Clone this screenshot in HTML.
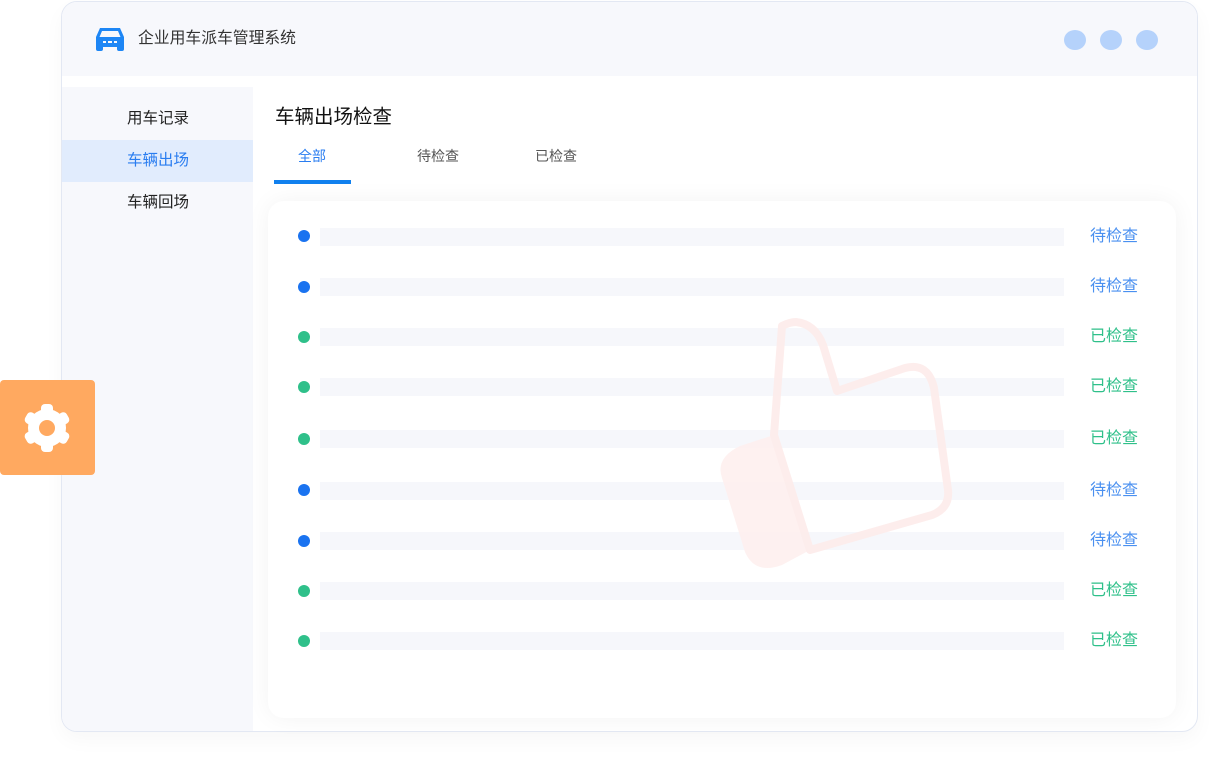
<!DOCTYPE html>
<html><head><meta charset="utf-8"><style>
*{margin:0;padding:0;box-sizing:border-box}
body{width:1225px;height:770px;background:#fff;position:relative;overflow:hidden;font-family:"Liberation Sans","Noto Sans CJK SC",sans-serif}
.card{position:absolute;left:61px;top:1px;width:1137px;height:731px;border:1.5px solid #e3e8f3;border-radius:16px;background:#fff;overflow:hidden;box-shadow:0 8px 20px rgba(0,0,0,0.03)}
.hdr{position:absolute;left:0;top:0;width:100%;height:74px;background:#f7f8fc}
.side{position:absolute;left:0;top:85px;width:191px;height:650px;background:#f7f8fc}
.it{position:absolute;left:0;width:191px;height:42px;line-height:42px;padding-left:65px;font-size:15.5px;color:#222}
.ab{position:absolute;font-size:15px}
.panel{position:absolute;left:268px;top:201px;width:908px;height:517px;background:#fff;border-radius:16px;box-shadow:0 0 24px rgba(0,0,0,0.05)}
.dot{position:absolute;left:298px;width:12px;height:12px;border-radius:50%}
.bar{position:absolute;left:320px;width:744px;height:18px;background:#f6f7fb}
.lb{position:absolute;left:1090px;font-size:16px;line-height:20px}
.b{color:#4a90f0}.g{color:#2fc08a}
</style></head><body>
<div class="card">
 <div class="hdr"></div>
 <div class="side"></div>
 <div class="it" style="top:96px">用车记录</div>
 <div class="it" style="top:138px;background:#e1ecfd;color:#2a7df0">车辆出场</div>
 <div class="it" style="top:180px">车辆回场</div>
</div>
<svg style="position:absolute;left:94px;top:26px" width="32" height="26" viewBox="0 0 32 26"><path d="M6 2h20l4 9v12a2 2 0 0 1-2 2h-3a2 2 0 0 1-2-2v-2H9v2a2 2 0 0 1-2 2H4a2 2 0 0 1-2-2V11z" fill="#1d86f5"/><path d="M8 5h16l2.5 6h-21z" fill="#f7f8fc"/><rect x="9" y="15" width="3" height="2" fill="#f7f8fc"/><rect x="14" y="15" width="4" height="2" fill="#f7f8fc"/><rect x="20" y="15" width="3" height="2" fill="#f7f8fc"/></svg>
<div class="ab" style="left:138px;top:25px;font-size:15.8px;color:#333">企业用车派车管理系统</div>
<div style="position:absolute;left:1064px;top:30px;width:22px;height:20px;border-radius:50%;background:#b5d2fb"></div>
<div style="position:absolute;left:1100px;top:30px;width:22px;height:20px;border-radius:50%;background:#b5d2fb"></div>
<div style="position:absolute;left:1136px;top:30px;width:22px;height:20px;border-radius:50%;background:#b5d2fb"></div>
<div class="ab" style="left:275px;top:100px;font-size:19.5px;color:#111">车辆出场检查</div>
<div class="ab" style="left:298px;top:146px;font-size:14px;color:#2a7df0">全部</div>
<div class="ab" style="left:417px;top:146px;font-size:14px;color:#555">待检查</div>
<div class="ab" style="left:535px;top:146px;font-size:14px;color:#555">已检查</div>
<div style="position:absolute;left:274px;top:180px;width:77px;height:4px;background:#1080ee"></div>
<div class="panel"></div>
<div class="dot" style="top:230px;background:#1a73f0"></div><div class="bar" style="top:228px"></div><div class="lb b" style="top:227px">待检查</div>
<div class="dot" style="top:281px;background:#1a73f0"></div><div class="bar" style="top:278px"></div><div class="lb b" style="top:277px">待检查</div>
<div class="dot" style="top:331px;background:#2fc08a"></div><div class="bar" style="top:328px"></div><div class="lb g" style="top:327px">已检查</div>
<div class="dot" style="top:381px;background:#2fc08a"></div><div class="bar" style="top:378px"></div><div class="lb g" style="top:377px">已检查</div>
<div class="dot" style="top:433px;background:#2fc08a"></div><div class="bar" style="top:430px"></div><div class="lb g" style="top:429px">已检查</div>
<div class="dot" style="top:484px;background:#1a73f0"></div><div class="bar" style="top:482px"></div><div class="lb b" style="top:481px">待检查</div>
<div class="dot" style="top:535px;background:#1a73f0"></div><div class="bar" style="top:532px"></div><div class="lb b" style="top:531px">待检查</div>
<div class="dot" style="top:585px;background:#2fc08a"></div><div class="bar" style="top:582px"></div><div class="lb g" style="top:581px">已检查</div>
<div class="dot" style="top:635px;background:#2fc08a"></div><div class="bar" style="top:632px"></div><div class="lb g" style="top:631px">已检查</div>
<svg style="position:absolute;left:0;top:0;opacity:0.9" width="1225" height="770"><path d="M774 435 L740 446 Q715 458 722 478 L745 552 Q755 575 782 565 L810 550 Z" fill="#fef0ef"/><path d="M774 435 L782 326 Q790 322 796 322 Q815 324 823 345 L837 391 L905 368 Q928 362 934 388 L948 490 Q950 508 932 515 L810 550 Z" fill="none" stroke="#fdeceb" stroke-width="8" stroke-linejoin="round"/></svg>
<div style="position:absolute;left:0;top:380px;width:95px;height:95px;background:#ffa960;border-radius:4px"></div>
<svg style="position:absolute;left:22px;top:403px" width="50" height="50" viewBox="-25 -25 50 50"><g fill="#fff"><circle r="19"/><rect x="-6" y="-24" width="12" height="10" rx="4"/><rect x="-6" y="-24" width="12" height="10" rx="4" transform="rotate(60)"/><rect x="-6" y="-24" width="12" height="10" rx="4" transform="rotate(120)"/><rect x="-6" y="-24" width="12" height="10" rx="4" transform="rotate(180)"/><rect x="-6" y="-24" width="12" height="10" rx="4" transform="rotate(240)"/><rect x="-6" y="-24" width="12" height="10" rx="4" transform="rotate(300)"/></g><circle r="8" fill="#ffa960"/></svg>
</body></html>
